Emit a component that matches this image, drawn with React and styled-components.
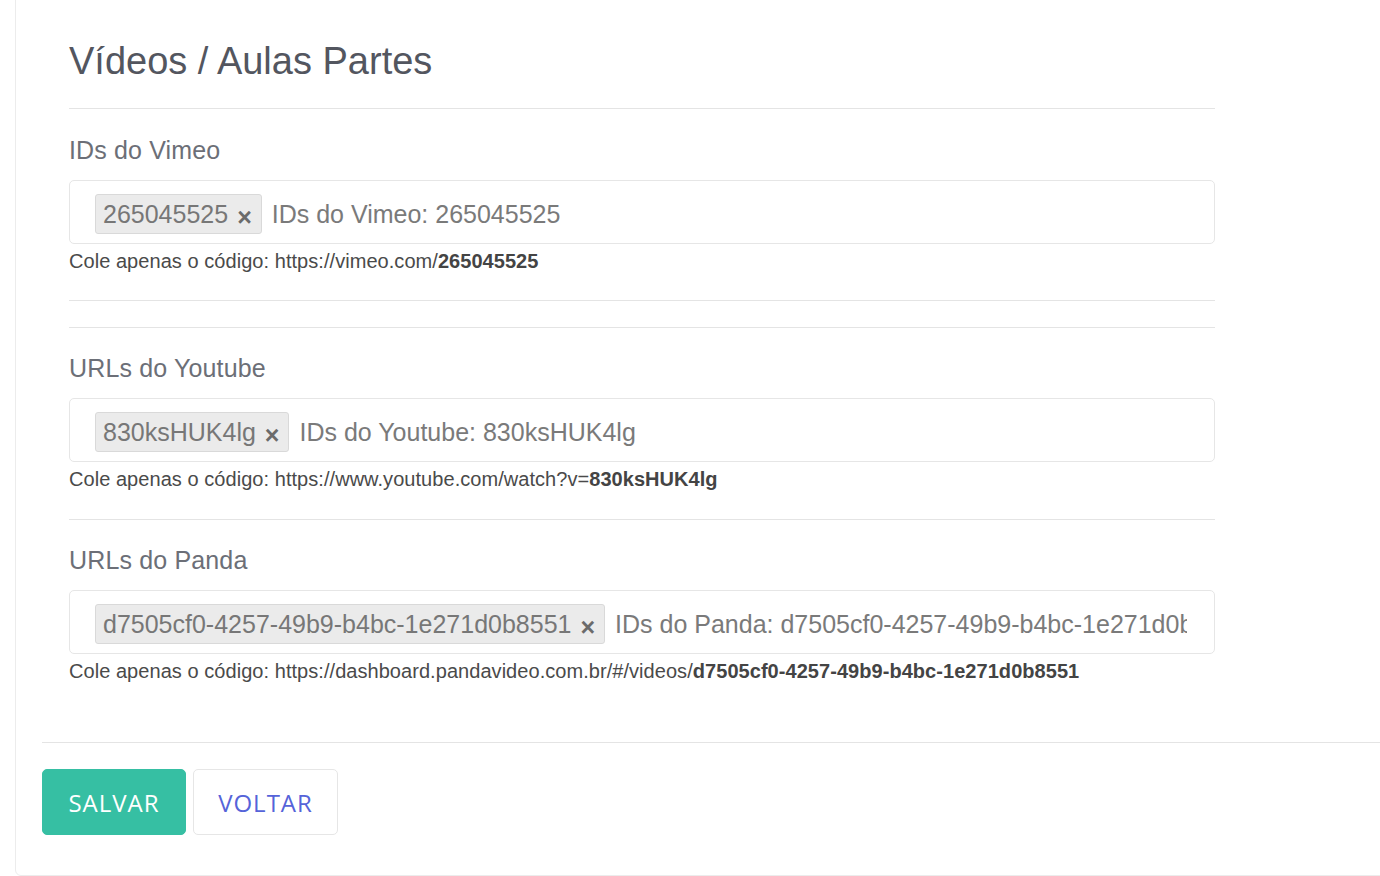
import React from "react";
import styled, { createGlobalStyle } from "styled-components";

const Global = createGlobalStyle`
  html, body {
    margin: 0;
    padding: 0;
    background: #fff;
    overflow: hidden;
  }
  body {
    font-family: "Liberation Sans", Arial, Helvetica, sans-serif;
  }
`;

const Card = styled.div`
  margin: -10px -20px 0 15px;
  padding: 10px 0 0 26px;
  border: 1px solid #ececec;
  border-radius: 6px;
  background: #fff;
  height: 886px;
  box-sizing: border-box;
`;

const Body = styled.div`
  padding: 0 27px;
  width: 1146px;
`;

const Title = styled.h2`
  margin: 37px 0 0;
  font-size: 38px;
  line-height: 46px;
  font-weight: 400;
  color: #53565f;
`;

const Divider = styled.hr`
  margin: ${(p) => p.$top || 0}px 0 0;
  border: 0;
  border-top: 1px solid #e4e4e4;
  height: 0;
`;

const Label = styled.div`
  margin-top: ${(p) => (p.$first ? 26 : 25)}px;
  font-size: 25px;
  line-height: 30px;
  color: #6c6f77;
  letter-spacing: 0.15px;
`;

const TagBox = styled.div`
  margin-top: 15px;
  height: 64px;
  box-sizing: border-box;
  border: 1px solid #e6e6e6;
  border-radius: 5px;
  padding: 13px 27px 9px 25px;
  display: flex;
  align-items: flex-start;
  overflow: hidden;
`;

const Tag = styled.span`
  flex: none;
  height: 40px;
  box-sizing: border-box;
  display: inline-flex;
  align-items: center;
  gap: 9px;
  padding: 0 9px 0 7px;
  background: #ebebeb;
  border: 1px solid #d9d9d9;
  border-radius: 3px;
  font-size: 25px;
  color: #777;
`;

const Remove = styled.span`
  font-size: 25px;
  font-weight: 700;
  color: #6b6b6b;
  line-height: 1;
  margin-top: 6px;
`;

const Entry = styled.input`
  flex: 1;
  min-width: 0;
  height: 40px;
  margin-left: 10px;
  padding: 0;
  border: 0;
  outline: none;
  background: transparent;
  font-family: inherit;
  font-size: 25px;
  color: #555;
  &::placeholder {
    color: #7a7a7a;
  }
`;

const Help = styled.div`
  margin-top: 5px;
  font-size: 20px;
  line-height: 24px;
  letter-spacing: 0.05px;
  color: #4a4a4a;
  b {
    color: #444;
  }
`;

const Footer = styled.div`
  margin-top: 59px;
  border-top: 1px solid #e4e4e4;
  padding-top: 26px;
  display: flex;
  gap: 7px;
`;

const Button = styled.button`
  height: 66px;
  width: ${(p) => p.$w}px;
  box-sizing: border-box;
  border-radius: 5px;
  border: 1px solid ${(p) => (p.$primary ? "#36bfa3" : "#e6e6e6")};
  background: ${(p) => (p.$primary ? "#36bfa3" : "#fff")};
  color: ${(p) => (p.$primary ? "#fff" : "#5563d9")};
  font-family: "Open Sans", "Liberation Sans", sans-serif;
  font-size: 24px;
  letter-spacing: 1px;
  cursor: pointer;
`;

function Field({ label, tag, placeholder, url, code, first }) {
  return (
    <>
      <Label $first={first}>{label}</Label>
      <TagBox>
        <Tag>
          {tag}
          <Remove>×</Remove>
        </Tag>
        <Entry placeholder={placeholder} readOnly />
      </TagBox>
      <Help>
        Cole apenas o código: {url}
        <b>{code}</b>
      </Help>
    </>
  );
}

export default function App() {
  const panda = "d7505cf0-4257-49b9-b4bc-1e271d0b8551";
  return (
    <>
      <Global />
      <Card>
        <Body>
          <Title>Vídeos / Aulas Partes</Title>
          <Divider $top={24} />
          <Field
            first
            label="IDs do Vimeo"
            tag="265045525"
            placeholder="IDs do Vimeo: 265045525"
            url="https://vimeo.com/"
            code="265045525"
          />
          <Divider $top={27} />
          <Divider $top={26} />
          <Field
            label="URLs do Youtube"
            tag="830ksHUK4lg"
            placeholder="IDs do Youtube: 830ksHUK4lg"
            url="https://www.youtube.com/watch?v="
            code="830ksHUK4lg"
          />
          <Divider $top={28} />
          <Field
            label="URLs do Panda"
            tag={panda}
            placeholder={"IDs do Panda: " + panda}
            url="https://dashboard.pandavideo.com.br/#/videos/"
            code={panda}
          />
        </Body>
        <Footer>
          <Button $primary $w={144}>SALVAR</Button>
          <Button $w={145}>VOLTAR</Button>
        </Footer>
      </Card>
    </>
  );
}
